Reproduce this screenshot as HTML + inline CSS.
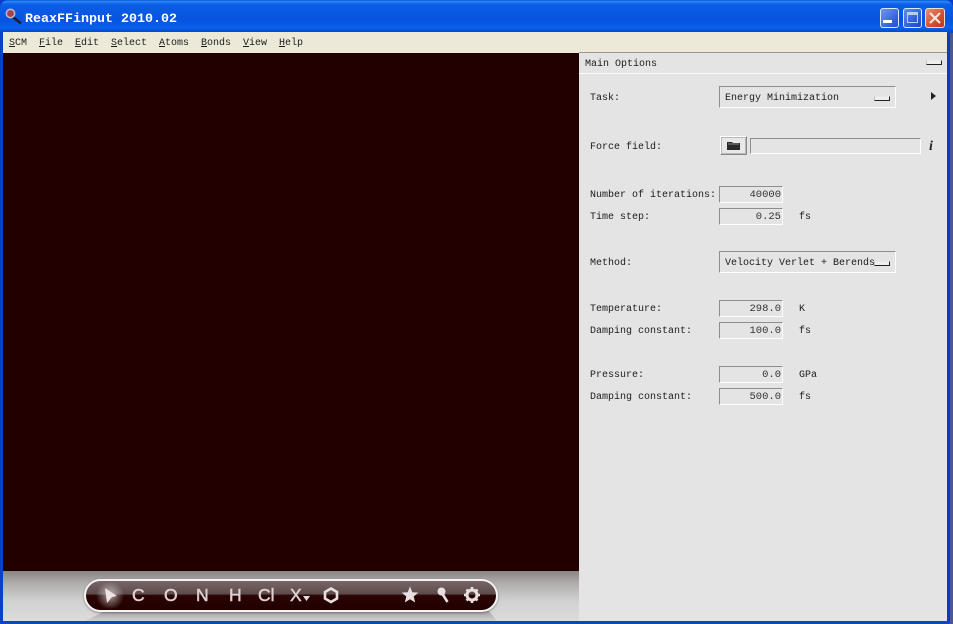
<!DOCTYPE html>
<html><head><meta charset="utf-8"><title>ReaxFFinput 2010.02</title>
<style>
html,body{margin:0;padding:0;background:#fff}
#w{position:relative;width:953px;height:624px;overflow:hidden;background:#0a3ccc;font:10px/12px "Liberation Mono",monospace;color:#1c1c1c}
#w div{position:absolute}
.t{white-space:pre}
.i{box-sizing:border-box;height:17px;left:719px;width:64px;background:#e4e4e4;border:1px solid;border-color:#8e8e8e #fdfdfd #fdfdfd #8e8e8e;text-align:right;padding-right:1px;font-size:10.5px;line-height:16px;color:#333}
.m{box-sizing:border-box;left:719px;width:177px;height:22px;border:1px solid;border-color:#8e8e8e #fdfdfd #fdfdfd #8e8e8e;background:#e4e4e4}
.g{background:#efefef;border:1px solid;border-color:#e8e8e8 #222 #222 #c4c4c4;box-sizing:border-box;height:5px;width:16px}
.k{font:17.500px/19px 'Liberation Sans',sans-serif;color:#dcd0d0;white-space:pre;-webkit-text-stroke:.5px #dcd0d0}
u{text-decoration:underline}
</style></head><body><div id="w">
<div style="left:0;top:0;width:953px;height:33px;border-radius:8px 8px 0 0;background:linear-gradient(#0a4fd8 0,#2a86f4 4%,#0c5ee6 14%,#0753e0 60%,#0860ea 85%,#0345c4 100%)"></div>
<svg style="position:absolute;left:4px;top:7px" width="20" height="18" viewBox="0 0 20 18"><path d="M9 10l8 6.500" stroke="#1c1c2c" stroke-width="2.500"/><circle cx="6.500" cy="6.500" r="4.200" fill="#a8404e" stroke="#b4b4c8" stroke-width="1.600"/></svg>
<div class="t" style="left:25px;top:12px;font-size:13.33px;line-height:15px;font-weight:bold;color:#fff">ReaxFFinput 2010.02</div>

<div style="left:880px;top:8px;width:19px;height:20px;box-sizing:border-box;border:1px solid #dfe8fa;border-radius:3px;background:linear-gradient(135deg,#6f98f0,#3560dc 70%,#2a50c8)"></div>
<div style="left:883px;top:20px;width:9px;height:3px;background:#fff"></div>
<div style="left:903px;top:8px;width:19px;height:20px;box-sizing:border-box;border:1px solid #dfe8fa;border-radius:3px;background:linear-gradient(135deg,#5f8df0,#2a58d8 70%,#2048c4)"></div>
<div style="left:907px;top:12px;width:11px;height:11px;box-sizing:border-box;border:1px solid #b8ccf4;border-top-width:3px"></div>
<div style="left:925px;top:8px;width:20px;height:20px;box-sizing:border-box;border:1px solid #f2dcd2;border-radius:3px;background:linear-gradient(135deg,#e89078,#d0502c 60%,#b83a18)"></div>
<svg style="position:absolute;left:925px;top:8px" width="20" height="20"><path d="M5 5l10 10M15 5L5 15" stroke="#f8e4dc" stroke-width="2.200"/></svg>

<div style="left:3px;top:32px;width:944px;height:21px;background:#ece9d8"></div>
<div class="t" style="left:9px;top:38px"><u>S</u>CM</div>
<div class="t" style="left:39px;top:38px"><u>F</u>ile</div>
<div class="t" style="left:75px;top:38px"><u>E</u>dit</div>
<div class="t" style="left:111px;top:38px"><u>S</u>elect</div>
<div class="t" style="left:159px;top:38px"><u>A</u>toms</div>
<div class="t" style="left:201px;top:38px"><u>B</u>onds</div>
<div class="t" style="left:243px;top:38px"><u>V</u>iew</div>
<div class="t" style="left:279px;top:38px"><u>H</u>elp</div>

<div style="left:3px;top:53px;width:576px;height:518px;background:#230000"></div>
<div style="left:3px;top:571px;width:576px;height:50px;background:linear-gradient(#8b8585 0,#b0adad 25%,#d2d1d1 60%,#dcdcdc 100%)"></div>
<div style="left:85px;top:611px;width:412px;height:10px;background:linear-gradient(#a4a2a2,#d0d0d0);clip-path:polygon(0 100%,5% 0,98% 0,100% 100%)"></div>

<div style="left:84px;top:579px;width:414px;height:33px;box-sizing:border-box;border:2px solid #f5f3f3;border-radius:17px;background:linear-gradient(#786666 0,#5e4c4c 44%,#2a0404 50%,#220000 100%);box-shadow:0 1px 2px rgba(60,60,60,.5)"></div>
<div style="left:94px;top:581px;width:32px;height:29px;background:radial-gradient(circle,rgba(255,255,255,.6),rgba(255,255,255,0) 65%)"></div>
<svg style="position:absolute;left:103px;top:587px" width="16" height="17"><path d="M2 1l12 8-5 1-5 6z" fill="#eee4e4"/></svg>
<div class="k" style="left:132px;top:586px">C</div>
<div class="k" style="left:164px;top:586px">O</div>
<div class="k" style="left:196px;top:586px">N</div>
<div class="k" style="left:229px;top:586px">H</div>
<div class="k" style="left:258px;top:586px">Cl</div>
<div class="k" style="left:290px;top:586px">X</div>
<svg style="position:absolute;left:302px;top:594px" width="10" height="8"><path d="M1 2h7L4.500 7z" fill="#e4dcdc"/></svg>
<svg style="position:absolute;left:322px;top:586px" width="18" height="18"><path d="M9 2.500L15 6v6.500L9 16l-6-3.500V6z" fill="none" stroke="#e8e0e0" stroke-width="2.600"/></svg>
<svg style="position:absolute;left:401px;top:586px" width="18" height="18"><path d="M9 .5l2.300 5.700 6 .4-4.600 3.900 1.500 6L9 13.200l-5.200 3.300 1.500-6L.7 6.600l6-.4z" fill="#e8e0e0"/></svg>
<svg style="position:absolute;left:435px;top:586px" width="16" height="18"><circle cx="6.500" cy="5.500" r="4" fill="#e8e0e0"/><path d="M7.500 8l5 8" stroke="#e8e0e0" stroke-width="2.600"/></svg>
<svg style="position:absolute;left:463px;top:586px" width="18" height="18"><circle cx="9" cy="9" r="5" fill="none" stroke="#e8e0e0" stroke-width="3"/><path d="M9 1v3M9 14v3M1 9h3M14 9h3M3.500 3.500l2 2M12.500 12.500l2 2M14.500 3.500l-2 2M5.500 12.500l-2 2" stroke="#e8e0e0" stroke-width="2.600"/></svg>

<div style="left:579px;top:53px;width:368px;height:568px;background:#e4e4e4"></div>
<div style="left:579px;top:52px;width:368px;height:1px;background:#9a9690"></div>
<div style="left:579px;top:73px;width:368px;height:1px;background:#fafafa"></div>
<div class="t" style="left:585px;top:59px">Main Options</div>
<div class="g" style="left:926px;top:60px"></div>

<div class="t" style="left:590px;top:93px">Task:</div>
<div class="m" style="top:86px"></div>
<div class="t" style="left:725px;top:93px">Energy Minimization</div>
<div class="g" style="left:874px;top:96px"></div>
<svg style="position:absolute;left:929px;top:91px" width="8" height="10"><path d="M2 1l5 4-5 4z" fill="#222"/></svg>

<div class="t" style="left:590px;top:142px">Force field:</div>
<div style="left:720px;top:136px;width:27px;height:19px;box-sizing:border-box;border:1px solid;border-color:#fff #888 #888 #fff;background:#e8e8e8;outline:1px solid #b8b8b8;outline-offset:-2px"></div>
<svg style="position:absolute;left:726px;top:140px" width="16" height="11"><path d="M1 2h5l1 1h7v7H1z" fill="#2a2a2a"/><path d="M2 4h11" stroke="#888"/></svg>
<div style="left:750px;top:138px;width:171px;height:16px;box-sizing:border-box;border:1px solid;border-color:#8e8e8e #fdfdfd #fdfdfd #8e8e8e;background:#e4e4e4"></div>
<div class="t" style="left:929px;top:139px;font:bold italic 14px/15px 'Liberation Serif',serif;color:#222">i</div>

<div class="t" style="left:590px;top:190px">Number of iterations:</div>
<div class="i" style="top:186px">40000</div>
<div class="t" style="left:590px;top:212px">Time step:</div>
<div class="i" style="top:208px">0.25</div>
<div class="t" style="left:799px;top:212px">fs</div>

<div class="t" style="left:590px;top:258px">Method:</div>
<div class="m" style="top:251px"></div>
<div class="t" style="left:725px;top:258px">Velocity Verlet + Berends</div>
<div class="g" style="left:874px;top:261px"></div>

<div class="t" style="left:590px;top:304px">Temperature:</div>
<div class="i" style="top:300px">298.0</div>
<div class="t" style="left:799px;top:304px">K</div>
<div class="t" style="left:590px;top:326px">Damping constant:</div>
<div class="i" style="top:322px">100.0</div>
<div class="t" style="left:799px;top:326px">fs</div>

<div class="t" style="left:590px;top:370px">Pressure:</div>
<div class="i" style="top:366px">0.0</div>
<div class="t" style="left:799px;top:370px">GPa</div>
<div class="t" style="left:590px;top:392px">Damping constant:</div>
<div class="i" style="top:388px">500.0</div>
<div class="t" style="left:799px;top:392px">fs</div>

<div style="left:0;top:33px;width:3px;height:591px;background:#0a40cc"></div>
<div style="left:947px;top:33px;width:3px;height:591px;background:#0a3cc0"></div>
<div style="left:950px;top:33px;width:3px;height:591px;background:#4a5a90"></div>
<div style="left:0;top:621px;width:950px;height:3px;background:#0f44c4"></div>
</div></body></html>
